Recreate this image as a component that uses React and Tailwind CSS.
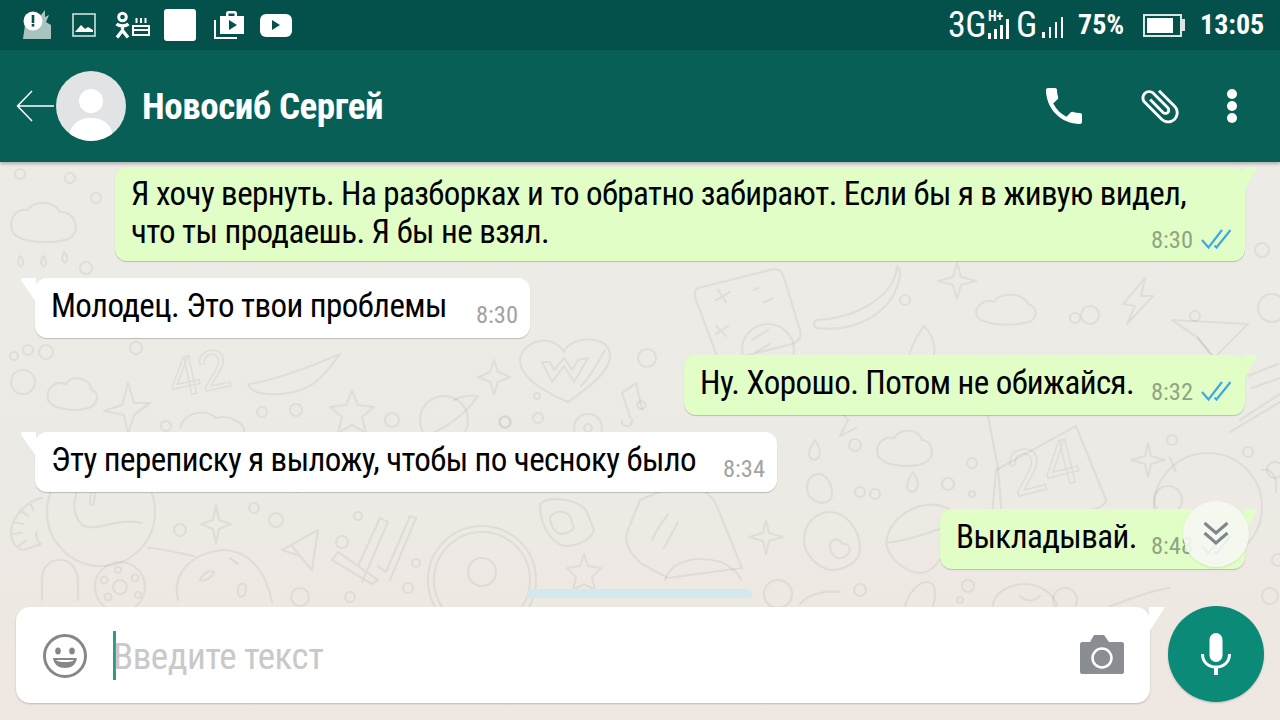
import React from "react";

const narrow = "font-['Roboto_Condensed','Liberation_Sans_Narrow',Roboto,sans-serif]";

// tiled wallpaper doodles, sits behind the chat column
// coordinates are page pixels, the viewBox starts under the header
function Wallpaper() {
  return (
    <svg className="absolute inset-0 w-full h-full" viewBox="0 162 1280 558" fill="none" stroke="#000" strokeOpacity="0.055" strokeWidth="2.2" strokeLinejoin="round" strokeLinecap="round">
      {/* top left */}
      <path d="M14 234c-8-14 2-26 14-24 4-10 26-10 32 2 14-2 22 18 10 26-12 6-46 6-56-4z" />
      <path d="M20 256c-2 4-3 8 0 10s5-6 0-10zM43 256c-2 4-3 8 0 10s5-6 0-10zM64 252c-2 4-3 8 0 10s5-6 0-10z" />
      <circle cx="86" cy="268" r="6" /><circle cx="96" cy="198" r="5" /><circle cx="70" cy="178" r="5" /><circle cx="20" cy="174" r="5" />

      {/* row under first bubble, left */}
      <circle cx="23" cy="382" r="12" />
      <path d="M48 400c-3-12 8-20 18-16 6-10 24-6 26 6 8 2 6 16-4 18-10 4-36 2-40-8z" />
      <path d="M128 383l-6 22-18 6 20 4 4 18 6-18 16-12-16 0z" />
      <text x="168" y="392" fontFamily="Roboto, sans-serif" fontSize="54" fill="none" strokeWidth="1.600" transform="rotate(-12 200 370)">42</text>
      <path d="M248 384c20-2 60-16 92-30-12 16-22 32-46 38-18 4-42 4-46-8z" />
      <path d="M180 428c4-16 26-20 36-10 14-4 30 6 28 14" />
      <path d="M352 391l6 14 16 2-12 10 4 16-14-8-14 8 4-16-12-10 16-2z" />
      <circle cx="444" cy="420" r="24" />
      <path d="M410 440c20-2 52-20 68-44-12-2-20 2-24 4M420 436c-8 4-12 8-8 8" />
      <path d="M494 360l4 12 12 5-12 5-4 12-4-12-12-5 12-5z" />
      <circle cx="136" cy="348" r="6" /><circle cx="28" cy="350" r="5" /><circle cx="46" cy="352" r="7" />
      <circle cx="296" cy="410" r="6" /><circle cx="262" cy="412" r="5" /><circle cx="392" cy="420" r="7" />
      <circle cx="166" cy="426" r="5" /><circle cx="505" cy="422" r="6" /><circle cx="14" cy="356" r="4" />

      {/* heart with w */}
      <path d="M520 360c0-16 30-30 44-8 6-16 44-18 46 2 2 18-28 38-42 48-14-6-48-22-48-42z" />
      <path d="M542 362l10 20 12-16 10 16 14-24-10 2-6 10-8-12-10 12-4-8z" />
      <path d="M605 350c-8 14-14 26-24 36" />
      <path d="M622 420a5 5 0 108-3l-8-24 14-10 6 26" /><path d="M642 409a4 4 0 10-1 0" />
      <circle cx="647" cy="358" r="9" /><circle cx="537" cy="396" r="3" /><circle cx="538" cy="418" r="5" /><circle cx="505" cy="422" r="5" />
      <circle cx="588" cy="428" r="14" />
      <circle cx="588" cy="428" r="4" />

      {/* upper right */}
      <path d="M698 288l72-18c8-2 12 0 14 8l16 52c2 8-2 12-8 14l-64 16c-6 0-10-2-12-6l-20-54c-2-6-2-10 2-12z" />
      <path d="M718 290l8 12M716 300l14-8M764 302l8-3M754 290l4-2M716 334l12-8M716 326l10 10" />
      <circle cx="768" cy="350" r="26" />
      <path d="M752 340l16-10M756 352l14-8" />
      <path d="M897 266c-2 30-40 52-80 54-4 2-4 6 0 8 30 4 64-8 78-36 4-10 8-20 2-26z" />
      <path d="M957 263l4 14 15 4-15 4-4 14-4-14-15-4 15-4z" />
      <circle cx="905" cy="300" r="5" />
      <path d="M978 318c-6-10 6-20 16-16 4-10 30-10 34 2 10 2 10 16 0 18-14 4-40 4-50-4z" />
      <circle cx="1075" cy="318" r="5" /><circle cx="1090" cy="315" r="9" /><circle cx="1195" cy="316" r="5" />
      <path d="M1145 278l-22 26 12 2-8 18 26-28-12 0z" />
      <path d="M1172 320l76 4-34 34-16-20z" />
      <path d="M1198 338l16 20" />
      <circle cx="1272" cy="308" r="14" />
      <circle cx="1262" cy="250" r="7" />
      <path d="M908 360c4-20 14-30 16-34 8 8 14 20 8 40" />
      <path d="M860 390l-6 18-18-2 12 14-8 16 16-8" />
      <circle cx="872" cy="398" r="8" />
      <path d="M1248 376l30-12M1252 388l28-10" />

      {/* lower band, left */}
      <circle cx="101" cy="512" r="54" />
      <path d="M82 475c-8 22-12 38 0 50 14 8 34-8 60-2M96 478c-4 8-6 14-6 24 0 4 4 4 4 0l2-18c0-4 0-6 0-6" />
      <path d="M42 498c-14 2-30 18-31 34 0 8 4 16 12 18l18-6c-4-2-6-8-4-12M20 510l8 6M13 522l10 2M12 534l10-1M18 546l8-5M30 502l3 8" />
      <path d="M42 600v-20c0-14 8-20 18-20s18 8 18 22v18" />
      <circle cx="120" cy="587" r="25" />
      <circle cx="120" cy="587" r="7" /><circle cx="104" cy="580" r="3.500" /><circle cx="118" cy="570" r="3" /><circle cx="135" cy="578" r="3.500" /><circle cx="138" cy="595" r="3" /><circle cx="108" cy="597" r="3.500" />
      <path d="M178 600c-6-24 10-46 44-50 26 0 44 20 50 52" />
      <path d="M200 580c4-8 10-10 14-8-2 6-10 10-14 8zM230 558l8 6M238 590a4 6 10 108 0 4 6 10 10-8 0z" />
      <path d="M148 548c14 0 34 6 46 8" />
      <path d="M216 505l3 15 12 4-12 5-3 15-3-15-12-5 12-4z" />
      <circle cx="254" cy="508" r="5" /><circle cx="276" cy="520" r="7" /><circle cx="180" cy="530" r="6" />
      <path d="M282 550l36-20-6 40-12-14zM300 556l-8-10" />
      <circle cx="342" cy="542" r="6" /><circle cx="358" cy="516" r="4" /><circle cx="416" cy="563" r="4" /><circle cx="408" cy="588" r="5" /><circle cx="350" cy="597" r="5" /><circle cx="300" cy="597" r="9" />
      <path d="M332 560l40 24 6-4-40-28zM362 582l26-60-8-4-22 48M390 580l26-62-6-2-24 56-8-6" />
      <circle cx="482" cy="580" r="54" />
      <circle cx="482" cy="580" r="48" />
      <circle cx="482" cy="572" r="14" />
      <path d="M540 504c8-8 36-6 46 6l8 20c-2 8-14 16-30 16-14-4-24-22-24-42z" />
      <path d="M550 518c4-8 14-8 20-2l4 12c-2 4-10 6-14 6-6-2-10-10-10-16z" />
      <path d="M584 554l4 12 13 2-9 9 3 13-11-6-11 6 3-13-9-9 13-2z" />
      <path d="M296 492l56-14" />

      {/* lower band, right */}
      <path d="M640 500l-12 30c-6 12 4 26 14 34l26 14 74-10-26-64c-8-14-20-20-38-20z" />
      <path d="M652 540c4-10 12-20 16-26M664 548l14-26" />
      <path d="M665 580c8-22 34-24 56-18 10 4 18 12 20 18" />
      <path d="M766 520l3 13 14 4-14 4-3 13-3-13-14-4 14-4z" />
      <path d="M804 540c0-16 12-28 26-28 16 0 30 18 30 36 0 14-14 22-30 22-16-4-26-18-26-30z" />
      <path d="M830 546c0-8 10-8 12-2 6-2 10 4 6 10-4 4-10 6-14 2-2-2-4-6-4-10z" />
      <path d="M886 543c2-18 16-34 40-38 14-2 30 4 28 14-4 10-50 22-68 24zM886 543c2 14 18 30 36 30 14-2 26-22 30-46" />
      <path d="M878 456c-4-12 6-20 16-18 6-10 24-10 28 2 10 0 14 16 4 22-10 6-40 6-48-6z" />
      <path d="M815 440c-4 6-6 10-6 14 0 6 8 8 10 2 2-4 0-10-4-16zM913 472c-4 6-6 10-6 14 0 6 8 8 10 2 2-4 0-10-4-16z" />
      <path d="M807 488c0-10 6-14 12-14s13 8 13 20c0 8-8 10-14 8-6-2-11-6-11-14z" />
      <circle cx="855" cy="445" r="6" /><circle cx="860" cy="492" r="5" /><circle cx="875" cy="494" r="5" /><circle cx="948" cy="484" r="6" /><circle cx="972" cy="463" r="5" /><circle cx="972" cy="494" r="3" /><circle cx="985" cy="518" r="5" />
      <path d="M996 470l80-44 30 74c0 4-4 6-8 8l-94 22c-6-2-10-8-12-14z" />
      <path d="M988 416l10 52 4 50" />
      <text x="1008" y="490" fontFamily="Roboto, sans-serif" fontSize="62" fill="none" strokeWidth="1.600" transform="rotate(-14 1040 465)">24</text>
      <path d="M1148 443l3 13 14 4-14 4-3 13-3-13-14-4 14-4z" />
      <circle cx="1168" cy="500" r="14" />
      <circle cx="1208" cy="507" r="54" />
      <path d="M1262 470c10-2 16 8 14 22M1170 458l6 14" />
      <circle cx="1172" cy="440" r="5" /><circle cx="1248" cy="452" r="5" /><circle cx="1275" cy="470" r="8" />
      <path d="M1230 432l50-30M1240 420l40-26" />

      {/* last strip above the input */}
      <path d="M993 606c0-14 18-22 32-22s30 10 32 22" />
      <path d="M1020 596c6 6 14 6 20 0" />
      <circle cx="860" cy="590" r="6" /><circle cx="968" cy="586" r="6" /><circle cx="1065" cy="600" r="12" /><circle cx="960" cy="600" r="3" /><circle cx="778" cy="594" r="14" />
      <path d="M800 604c8-10 26-14 40-12" />
      <path d="M905 606c4-14 14-24 22-24s10 10 6 24" />
      <path d="M1110 606c20-6 40-16 60-18" />
      <circle cx="1270" cy="596" r="8" />
      <circle cx="1278" cy="560" r="6" />
    </svg>
  );
}

function Ticks() {
  return (
    <svg width="30" height="20" viewBox="0 0 30 20" fill="none" stroke="#3fa8e4" strokeWidth="2.200" className="ml-[8px] mb-[5px]">
      <path d="M1 11l6.500 7.500L21 1M13.500 16.500L15.500 18.500 29.500 1" />
    </svg>
  );
}

function Bubble({ out, meta, className, children }) {
  return (
    <div className={`relative rounded-[12px] shadow-[0_1px_1px_rgba(0,0,0,0.2)] ${out ? "self-end bg-[#e1fec6]" : "self-start bg-white"} ${className}`}>
      {out ? (
        <svg width="14" height="24" viewBox="0 0 14 24" className="absolute -right-[13px] top-0 fill-[#e1fec6]">
          <path d="M0 0h14L0 24z" />
        </svg>
      ) : (
        <svg width="16" height="24" viewBox="0 0 16 24" className="absolute -left-[15px] top-0 fill-white">
          <path d="M16 0H4C1 0 0 1 2 4l14 20z" />
        </svg>
      )}
      {children}
      {meta}
    </div>
  );
}

function Time({ out, children }) {
  return (
    <span className={`text-[24.500px] leading-[28px] ${narrow} ${out ? "text-[#8fa582]" : "text-[#a3a3a3]"}`}>{children}</span>
  );
}

function StatusBar() {
  return (
    <div className="h-[50px] shrink-0 bg-[#04504a] flex items-center text-white pl-[22px] pr-[16px]">
      <svg width="30" height="30" viewBox="0 0 30 30" className="mr-[20px]">
        <path d="M1 29l2-14 8-4 8-6 4-5 0 7 4-2-3 7 5 3v14z" fill="#a9c4bf" />
        <circle cx="11" cy="11" r="9.500" fill="#fff" />
        <rect x="9.700" y="5" width="2.600" height="8" fill="#04504a" />
        <rect x="9.700" y="14" width="2.600" height="2.600" fill="#04504a" />
      </svg>
      <svg width="24" height="24" viewBox="0 0 24 24" className="mr-[19px]">
        <rect x="1" y="1" width="22" height="22" fill="none" stroke="#cfe0dc" strokeWidth="1.600" />
        <path d="M3 19l6-7 4 4 3-2 5 3v2H3z" fill="#fff" />
      </svg>
      <svg width="35" height="28" viewBox="0 0 35 28" className="mr-[14px]" fill="none" stroke="#fff">
        <circle cx="7.500" cy="6" r="3.800" strokeWidth="3" />
        <path d="M1.500 13c3 2.500 9 2.500 12 0M7.500 15v3M2 26.500l5.500-7 5.500 7" strokeWidth="3.400" />
        <path d="M18 15h16v9H18zM18 19h16M21.500 7v5M26 7v5M30.500 7v5" strokeWidth="2" />
      </svg>
      <div className="w-[32px] h-[32px] rounded-[3px] bg-white mr-[18px]" />
      <svg width="30" height="28" viewBox="0 0 30 28" className="mr-[16px]">
        <path d="M6 5h6V2.500C12 1 13 0 14.500 0h6C22 0 23 1 23 2.500V5h7v18H6z" fill="#fff" />
        <path d="M14.500 2.500h6V5h-6z" fill="#04504a" />
        <path d="M15 9l8 5-8 5z" fill="#04504a" />
        <path d="M1 9v18h22" fill="none" stroke="#fff" strokeWidth="2" />
      </svg>
      <div className="w-[32px] h-[23px] rounded-[6px] bg-white flex items-center justify-center">
        <div className="w-0 h-0 border-y-[5px] border-y-transparent border-l-[8px] border-l-[#04504a]" />
      </div>

      <div className="ml-auto flex items-center">
        <span className={`w-[36px] text-[36px] tracking-[-0.5px] leading-none ${narrow}`}>3G</span>
        <div className="relative w-[21px] h-[28px] ml-[4px]">
          <span className={`absolute -top-[2px] left-0 text-[14px] leading-none font-bold ${narrow}`}>H+</span>
          <div className="absolute bottom-0 left-0 flex items-end gap-[3px]">
            <div className="w-[3px] h-[6px] bg-white" />
            <div className="w-[3px] h-[10px] bg-white" />
            <div className="w-[3px] h-[14px] bg-white" />
            <div className="w-[3px] h-[20px] bg-white" />
          </div>
        </div>
        <span className={`w-[23px] text-[36px] leading-none ml-[7px] ${narrow}`}>G</span>
        <div className="flex items-end gap-[3.500px] h-[22px] w-[21px] ml-[3px] mt-[3px]">
          <div className="w-[3px] h-[6px] bg-white" />
          <div className="w-[2.500px] h-[11px] bg-white" />
          <div className="w-[2.500px] h-[16px] bg-white" />
          <div className="w-[2.500px] h-[21px] bg-white" />
        </div>
        <span className={`w-[44px] text-[28px] leading-none font-bold ml-[15px] ${narrow}`}>75%</span>
        <div className="ml-[21px] flex items-center">
          <div className="w-[39px] h-[23px] border-[2px] border-[#d9e6e3] p-[2px]">
            <div className="w-[26px] h-full bg-white" />
          </div>
          <div className="w-[3px] h-[12px] bg-[#d9e6e3]" />
        </div>
        <span className={`w-[64px] text-[28px] leading-none font-bold ml-[15px] ${narrow}`}>13:05</span>
      </div>
    </div>
  );
}

function Header() {
  return (
    <div className="relative z-10 h-[112px] shrink-0 bg-[#075f55] flex items-center text-white shadow-[0_2px_3px_rgba(0,0,0,0.25)]">
      <svg width="38" height="34" viewBox="0 0 38 34" fill="none" stroke="#fff" strokeWidth="1.500" className="ml-[16px] mr-[2px]">
        <path d="M38 17H2M16 2L1.500 17 16 32" />
      </svg>
      <div className="relative w-[70px] h-[70px] rounded-full bg-[#e1e3e5] overflow-hidden shrink-0">
        <div className="absolute left-[23px] top-[18px] w-[24px] h-[24px] rounded-full bg-white" />
        <div className="absolute left-[13px] top-[47px] w-[44px] h-[40px] rounded-full bg-white" />
      </div>
      <span className={`ml-[16px] text-[37px] tracking-[-0.45px] leading-none font-bold ${narrow}`}>Новосиб Сергей</span>
      <svg width="48" height="48" viewBox="0 0 24 24" fill="#fff" className="ml-auto mr-[49px]">
        <path d="M6.620 10.790c1.440 2.830 3.760 5.140 6.590 6.590l2.200-2.200c.27-.27.67-.36 1.020-.24 1.120.37 2.330.57 3.570.57.55 0 1 .45 1 1V20c0 .55-.45 1-1 1-9.390 0-17-7.610-17-17 0-.55.45-1 1-1h3.500c.55 0 1 .45 1 1 0 1.250.2 2.450.57 3.570.11.35.03.74-.25 1.020l-2.200 2.200z" />
      </svg>
      <svg width="46" height="46" viewBox="0 0 24 24" fill="#fff" className="-rotate-45 mr-[44px]">
        <path d="M16.500 6v11.500c0 2.210-1.790 4-4 4s-4-1.790-4-4V5c0-1.380 1.120-2.500 2.500-2.500s2.500 1.120 2.500 2.500v10.500c0 .55-.45 1-1 1s-1-.45-1-1V6H10v9.500c0 1.380 1.120 2.500 2.500 2.500s2.500-1.120 2.500-2.500V5c0-2.210-1.790-4-4-4S7 2.790 7 5v12.500c0 3.040 2.460 5.500 5.500 5.500s5.500-2.460 5.500-5.500V6h-1.500z" />
      </svg>
      <div className="flex flex-col gap-[2px] mr-[43px]">
        <div className="w-[10px] h-[10px] rounded-full bg-white" />
        <div className="w-[10px] h-[10px] rounded-full bg-white" />
        <div className="w-[10px] h-[10px] rounded-full bg-white" />
      </div>
    </div>
  );
}

const msgText = `text-[33px] tracking-[-0.56px] leading-[38px] text-black ${narrow}`;

export default function App() {
  return (
    <div className="relative w-[1280px] h-[720px] overflow-hidden flex flex-col bg-gradient-to-b from-[#ecece6] via-[#ecebe6] to-[#efe7e1]">
      <StatusBar />
      <Header />

      <div className="relative flex-1 min-h-0 flex flex-col">
        <Wallpaper />

        {/* messages */}
        <div className="relative flex-1 min-h-0 flex flex-col gap-[17px] px-[35px] pt-[5px]">
          <Bubble out className="w-[1130px] h-[94px] pl-[16px] pr-[14px] pt-[8px]">
            <p className={msgText}>Я хочу вернуть. На разборках и то обратно забирают. Если бы я в живую видел,<br />что ты продаешь. Я бы не взял.</p>
            <div className="absolute right-[14px] bottom-[7px] flex items-end">
              <Time out>8:30</Time>
              <Ticks />
            </div>
          </Bubble>
          <Bubble className="w-[495px] h-[60px] pl-[16px] pb-[4px] flex items-center">
            <p className={msgText}>Молодец. Это твои проблемы</p>
            <div className="absolute right-[12px] bottom-[9px]"><Time>8:30</Time></div>
          </Bubble>
          <Bubble out className="w-[561px] h-[60px] pl-[16px] pb-[4px] flex items-center">
            <p className={msgText}>Ну. Хорошо. Потом не обижайся.</p>
            <div className="absolute right-[14px] bottom-[9px] flex items-end">
              <Time out>8:32</Time>
              <Ticks />
            </div>
          </Bubble>
          <Bubble className="w-[742px] h-[60px] pl-[16px] pb-[4px] flex items-center">
            <p className={msgText}>Эту переписку я выложу, чтобы по чесноку было</p>
            <div className="absolute right-[12px] bottom-[9px]"><Time>8:34</Time></div>
          </Bubble>
          <Bubble out className="w-[305px] h-[60px] pl-[16px] pb-[4px] flex items-center">
            <p className={msgText}>Выкладывай.</p>
            <div className="absolute right-[14px] bottom-[9px] flex items-end">
              <Time out>8:48</Time>
              <Ticks />
            </div>
          </Bubble>
        </div>

        {/* scroll to bottom button, floats over the last message */}
        <div className="absolute left-[1183px] top-[339px] w-[66px] h-[66px] rounded-full bg-[#f6f7f3]/90 shadow-[0_1px_2px_rgba(0,0,0,0.1)] flex items-center justify-center">
          <svg width="26" height="26" viewBox="0 0 26 26" fill="none" stroke="#7f868a" strokeWidth="3">
            <path d="M1.500 2L13 12 24.500 2M1.500 12L13 22 24.500 12" />
          </svg>
        </div>

        {/* date chip peeking out from behind the input */}
        <div className="absolute left-[527px] top-[427px] w-[225px] h-[9px] rounded-t-[6px] bg-[#d3e8f0]" />

        {/* input row */}
        <div className="relative shrink-0 h-[113px] flex items-start pl-[16px] pr-[16px]">
          <div className="relative w-[1134px] h-[96px] rounded-[14px] bg-white shadow-[0_1px_2px_rgba(0,0,0,0.2)] flex items-center">
            <svg width="16" height="25" viewBox="0 0 16 25" className="absolute -right-[15px] top-0 fill-white">
              <path d="M0 0h16L0 25z" />
            </svg>
            <svg width="46" height="46" viewBox="0 0 46 46" fill="none" className="ml-[26px]">
              <circle cx="23" cy="24" r="20.500" stroke="#868888" strokeWidth="3" />
              <ellipse cx="16" cy="19" rx="2.800" ry="3.600" fill="#868888" />
              <ellipse cx="30" cy="19" rx="2.800" ry="3.600" fill="#868888" />
              <path d="M11 26h24c-1 7-6 10-12 10s-11-3-12-10z" fill="#868888" />
              <path d="M14 28h18c-1.500 1.500-4 2-9 2s-7.500-.5-9-2z" fill="#fff" />
            </svg>
            <div className="w-[3px] h-[49px] bg-[#2b9c8a] ml-[25px]" />
            <span className={`-ml-[3px] mt-[3px] text-[37px] tracking-[-0.5px] leading-none text-[#c9c9c9] ${narrow}`}>Введите текст</span>
            <svg width="44" height="40" viewBox="0 0 44 40" className="ml-auto mr-[26px]">
              <path d="M2 7h8l4-7h10l5 7h13c1 0 2 1 2 2v28c0 1-1 2-2 2H2c-1 0-2-1-2-2V9c0-1 1-2 2-2z" fill="#8a8d91" />
              <circle cx="22" cy="23" r="9.500" fill="#8a8d91" stroke="#fff" strokeWidth="2.500" />
            </svg>
          </div>
          <div className="ml-auto -mt-[1px] w-[96px] h-[96px] rounded-full bg-[#0b8a78] shadow-[0_1px_2px_rgba(0,0,0,0.2)] flex items-center justify-center">
            <svg width="30" height="42" viewBox="0 0 30 42" fill="none">
              <rect x="8.500" y="0" width="13" height="29" rx="6.500" fill="#fff" />
              <path d="M1.500 21c0 8 5.500 13 13.500 13s13.500-5 13.500-13" stroke="#fff" strokeWidth="3" />
              <path d="M15 34v8" stroke="#fff" strokeWidth="4" />
            </svg>
          </div>
        </div>
      </div>
    </div>
  );
}
